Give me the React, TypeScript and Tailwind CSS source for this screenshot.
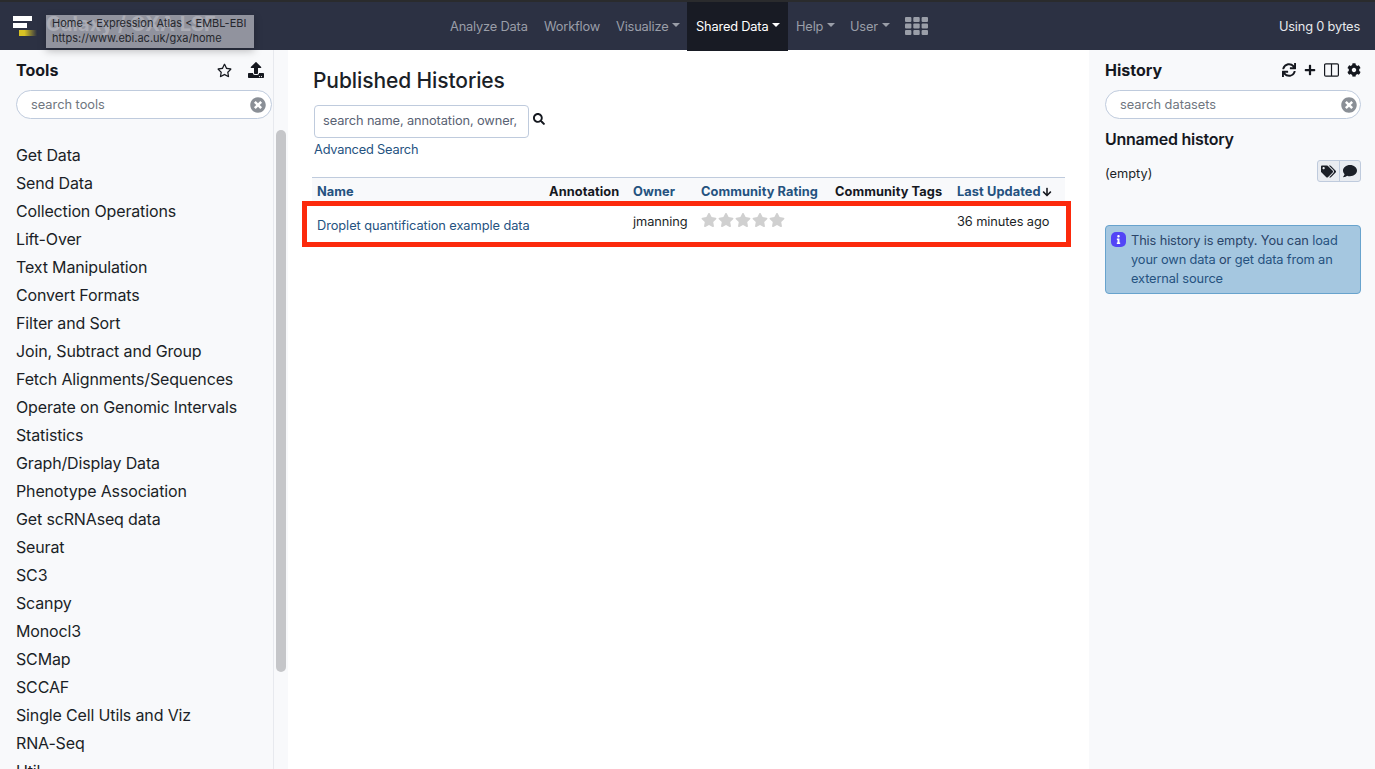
import React from "react";
import { FaRegStar, FaUpload, FaSync, FaPlus, FaCog, FaTags, FaComment, FaSearch, FaTimesCircle, FaStar, FaArrowDown, FaInfo } from "react-icons/fa";

const tools = ["Get Data","Send Data","Collection Operations","Lift-Over","Text Manipulation","Convert Formats","Filter and Sort","Join, Subtract and Group","Fetch Alignments/Sequences","Operate on Genomic Intervals","Statistics","Graph/Display Data","Phenotype Association","Get scRNAseq data","Seurat","SC3","Scanpy","Monocl3","SCMap","SCCAF","Single Cell Utils and Viz","RNA-Seq","Util"];

function Caret({ c = "border-t-[#9a9ea8]" }: { c?: string }) {
  return <span className={`ml-[4px] mb-[3px] inline-block h-0 w-0 border-x-[4px] border-t-[4px] border-x-transparent ${c}`} />;
}

function Nav({ children, caret, className = "" }: { children: React.ReactNode; caret?: boolean; className?: string }) {
  return (
    <div className={`flex items-center whitespace-nowrap text-[#9a9ea8] ${className}`}>
      {children}
      {caret && <Caret />}
    </div>
  );
}

function SearchPill({ text, right }: { text: string; right: string }) {
  return (
    <div className={`flex h-[29px] items-center justify-between rounded-full border border-[#bfcbdd] bg-white pl-[14px] text-[12.8px] text-[#6f7680] ${right}`}>
      <span>{text}</span>
      <FaTimesCircle className="text-[16px] text-[#8a8f96]" />
    </div>
  );
}

export default function App() {
  return (
    <div className="flex h-[769px] w-[1375px] flex-col overflow-hidden bg-white text-[12.8px] text-[#1b1f27] [font-family:Inter,'Liberation_Sans',sans-serif]">
      <header className="relative flex h-[50px] shrink-0 border-t-2 border-[#2a2b2d] bg-[#2c3143] pt-[1px] text-[12.8px] tracking-[-0.17px]">
        <div className="flex w-[450px] shrink-0 items-center pl-[13px]">
          <svg width="24" height="20" viewBox="0 0 24 20" className="mb-[1px]">
            <defs>
              <linearGradient id="g" x1="0" x2="1" y1="0" y2="0">
                <stop offset="0.3" stopColor="#d8c224" />
                <stop offset="1" stopColor="#d8c224" stopOpacity="0" />
              </linearGradient>
            </defs>
            <rect x="0" y="0" width="19" height="5" fill="#fff" />
            <rect x="0" y="7" width="14" height="5" fill="#fff" />
            <rect x="6" y="14" width="18" height="6" fill="url(#g)" />
          </svg>
          <span className="mb-[5px] ml-[9px] whitespace-nowrap text-[20px] font-bold tracking-normal text-[#d5d7dc]">Galaxy / GXA LSF</span>
        </div>
        <nav className="flex h-full items-center">
          <Nav className="w-[94px]">Analyze Data</Nav>
          <Nav className="w-[72px]">Workflow</Nav>
          <Nav caret className="w-[71px]">Visualize</Nav>
          <div className="mt-[-1px] flex h-[49px] w-[101px] items-center whitespace-nowrap bg-[#181b24] pl-[9px] pt-[1px] text-white">
            Shared Data
            <Caret c="border-t-white" />
          </div>
          <Nav caret className="ml-[8px] w-[54px]">Help</Nav>
          <Nav caret className="w-[55px]">User</Nav>
          <svg width="23" height="18" viewBox="0 0 23 18" className="mb-[1px] fill-[#9a9ea8]">
            <rect x="0" y="0" width="6.4" height="5" rx="1" />
            <rect x="8.3" y="0" width="6.4" height="5" rx="1" />
            <rect x="16.6" y="0" width="6.4" height="5" rx="1" />
            <rect x="0" y="6.5" width="6.4" height="5" rx="1" />
            <rect x="8.3" y="6.5" width="6.4" height="5" rx="1" />
            <rect x="16.6" y="6.5" width="6.4" height="5" rx="1" />
            <rect x="0" y="13" width="6.4" height="5" rx="1" />
            <rect x="8.3" y="13" width="6.4" height="5" rx="1" />
            <rect x="16.6" y="13" width="6.4" height="5" rx="1" />
          </svg>
        </nav>
        <div className="ml-auto flex items-center pr-[15px] text-[#e8e9ec]">Using 0 bytes</div>
        <div className="absolute left-[46px] top-[13px] h-[33px] w-[208px] whitespace-nowrap bg-[#a3a5ae]/85 px-[6px] pt-[1px] text-[11px] leading-[15px] tracking-normal text-[#25272d] shadow-[0_3px_8px_rgba(0,0,0,0.25)]">
          <div>Home &lt; Expression Atlas &lt; EMBL-EBI</div>
          <div>https://www.ebi.ac.uk/gxa/home</div>
        </div>
      </header>

      <div className="flex min-h-0 flex-1">
        <aside className="flex w-[288px] shrink-0 bg-[#f8f9fb]">
          <div className="flex w-[274px] shrink-0 flex-col overflow-hidden border-r border-[#e7e9ee]">
            <div className="pl-[16px] pr-[1px]">
              <div className="flex h-[40px] items-center justify-between pr-[8px]">
                <span className="text-[16px] font-bold text-[#15181f]">Tools</span>
                <div className="flex items-center gap-[16px] text-[#15181f]">
                  <FaRegStar className="text-[15px]" />
                  <FaUpload className="text-[16px]" />
                </div>
              </div>
              <SearchPill text="search tools" right="pr-[5px]" />
            </div>
            <div className="pl-[16px] pt-[22px] text-[16px] leading-[28px] tracking-[-0.15px] text-[#1b1f27]">
              {tools.map((t) => (
                <div key={t} className="whitespace-nowrap">{t}</div>
              ))}
            </div>
          </div>
          <div className="pl-[2px] pt-[80px]">
            <div className="h-[542px] w-[10px] rounded-full bg-[#c5c6c9]" />
          </div>
        </aside>

        <main className="relative w-[801px] shrink-0 pl-[25px]">
          <h1 className="pt-[17px] text-[21px] font-medium leading-[28px] tracking-[-0.1px] text-[#1b1f27]">Published Histories</h1>
          <div className="ml-[1px] mt-[10px] flex items-start">
            <div className="flex h-[33px] w-[215px] items-center overflow-hidden whitespace-nowrap rounded-[4px] border border-[#bfcbdd] pb-[2px] pl-[8px] tracking-[-0.1px] text-[#596273]">search name, annotation, owner,</div>
            <FaSearch className="ml-[4px] mt-[8px] text-[12px] text-[#15181f]" />
          </div>
          <div className="ml-[1px] mt-[4px] leading-[16px] tracking-[-0.2px] text-[#25527f]">Advanced Search</div>
          <div className="relative ml-[-1px] mt-[19px] w-[753px]">
            <div className="flex h-[28px] items-center whitespace-nowrap border-t border-[#bfcbdd] bg-[#f8f9fb] pl-[5px] pt-[1px] text-[12.8px] font-bold tracking-[0.08px]">
              <span className="w-[232px] text-[#25527f]">Name</span>
              <span className="w-[84px] text-[#15181f]">Annotation</span>
              <span className="w-[68px] text-[#25527f]">Owner</span>
              <span className="w-[134px] text-[#25527f]">Community Rating</span>
              <span className="w-[122px] text-[#15181f]">Community Tags</span>
              <span className="flex items-center text-[#25527f]">Last Updated<FaArrowDown className="ml-[1px] text-[10px] text-[#15181f]" /></span>
            </div>
            <div className="flex h-[36px] whitespace-nowrap pl-[5px]">
              <span className="w-[316px] pt-[11px] tracking-[-0.06px] text-[#25527f]">Droplet quantification example data</span>
              <span className="w-[68px] pt-[7px] tracking-[-0.08px]">jmanning</span>
              <span className="flex w-[256px] items-start pt-[7px] text-[#d0d0d0]">
                {[0, 1, 2, 3, 4].map((i) => <FaStar key={i} className="mr-[1px] text-[16px]" />)}
              </span>
              <span className="pt-[7px] tracking-[-0.08px]">36 minutes ago</span>
            </div>
            <div className="absolute left-[-10px] top-[24px] h-[46px] w-[769px] border-[5px] border-[#fc2a0c]" />
          </div>
        </main>

        <aside className="w-[286px] shrink-0 bg-[#f8f9fb] pl-[16px] pr-[14px]">
          <div className="flex h-[40px] items-center justify-between">
            <span className="text-[16px] font-bold text-[#15181f]">History</span>
            <div className="flex items-center gap-[8px] text-[#15181f]">
              <FaSync className="text-[14px]" />
              <FaPlus className="text-[12px]" />
              <svg width="15" height="14" viewBox="0 0 15 14" fill="none" stroke="currentColor" strokeWidth="1.2">
                <rect x="0.6" y="0.9" width="13.8" height="12.2" rx="1.2" />
                <line x1="7.5" y1="1" x2="7.5" y2="13" />
              </svg>
              <FaCog className="text-[14px]" />
            </div>
          </div>
          <SearchPill text="search datasets" right="pr-[3px]" />
          <div className="mt-[10px] text-[16px] font-semibold leading-[20px] tracking-[-0.25px] text-[#15181f]">Unnamed history</div>
          <div className="mt-[11px] flex items-start justify-between">
            <span className="pt-[4px]">(empty)</span>
            <div className="flex h-[22px] overflow-hidden rounded-[3px] border border-[#bfcbdd] bg-[#e9ecf1]">
              <div className="flex w-[22px] items-center justify-center border-r border-[#bfcbdd]"><FaTags className="text-[15px]" /></div>
              <div className="flex w-[20px] items-center justify-center"><FaComment className="text-[14px]" /></div>
            </div>
          </div>
          <div className="mt-[42px] flex h-[69px] gap-[5px] rounded-[4px] border border-[#68a3cd] bg-[#a5c7e0] pl-[5px] pt-[5px] leading-[19px] tracking-[-0.12px] text-[#2a4468]">
            <div className="mt-[1px] flex h-[15px] w-[15px] shrink-0 items-center justify-center rounded-[5px] bg-[#5345f6]"><FaInfo className="text-[9px] text-white" /></div>
            <div>
              This history is empty. You can <span className="text-[#25527f]">load your own data</span> or <span className="text-[#25527f]">get data from an external source</span>
            </div>
          </div>
        </aside>
      </div>
    </div>
  );
}
